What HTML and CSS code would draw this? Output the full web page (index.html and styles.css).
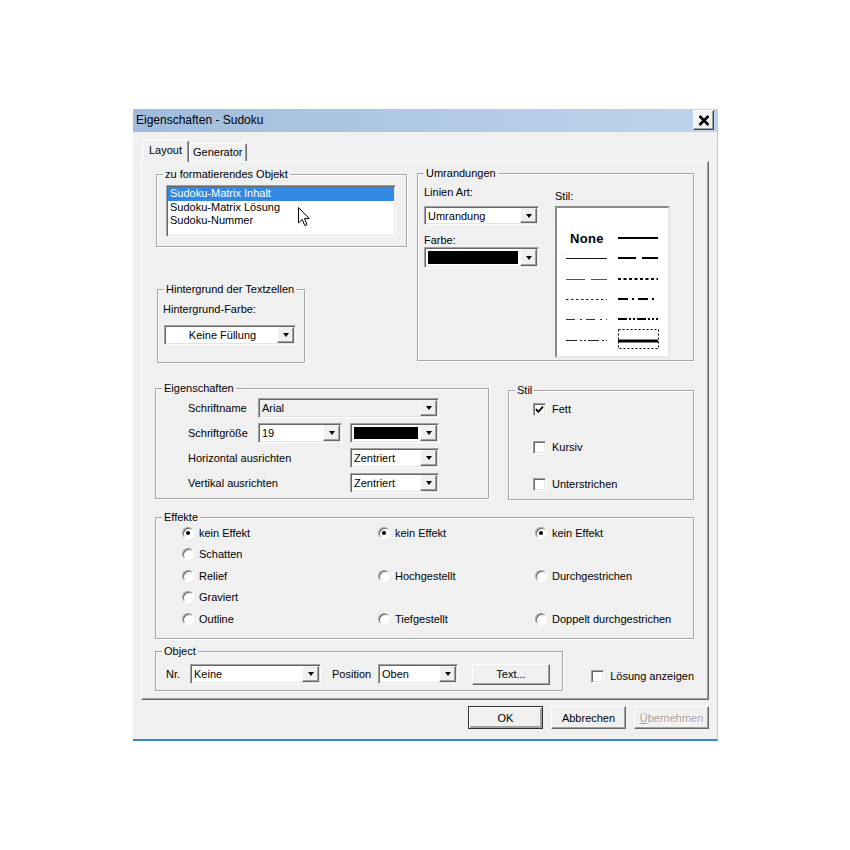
FILE: index.html
```html
<!DOCTYPE html>
<html lang="de">
    <head>
        <meta charset="UTF-8">
        <meta name="viewport" content="width=device-width, initial-scale=1.0">
        <title>Eigenschaften - Sudoku</title>
        <link rel="stylesheet" href="styles.css">
    </head>
    <body>
        <div class="dialog">
            <div class="titlebar">
                <span class="title">Eigenschaften - Sudoku</span>
                <span class="close">
                    <svg width="12" height="11" viewBox="0 0 12 11">
                        <path d="M1.5 1 L10.5 10 M10.5 1 L1.5 10" stroke="#000" stroke-width="2.6" fill="none"/>
                    </svg>
                </span>
            </div>

            <div class="body">
                <div class="tabs">
                    <div class="tab active">Layout</div>
                    <div class="tab">Generator</div>
                </div>

                <div class="panel">
                    <div class="row-top">
                        <div class="col-left">
                            <div class="group group-objekt">
                                <div class="legend">zu formatierendes Objekt</div>
                                <div class="group-body">
                                    <div class="listbox">
                                        <div class="item selected">Sudoku-Matrix Inhalt</div>
                                        <div class="item">Sudoku-Matrix Lösung</div>
                                        <div class="item">Sudoku-Nummer</div>
                                        <svg class="cursor" width="13" height="20" viewBox="0 0 13 20">
                                            <path d="M0.5 0.5 L0.5 16 L4.2 12.4 L6.8 18.6 L9 17.6 L6.5 11.6 L11.3 11.6 Z" fill="#fff" stroke="#000" stroke-width="1"/>
                                        </svg>
                                    </div>
                                </div>
                            </div>

                            <div class="group group-hintergrund">
                                <div class="legend">Hintergrund der Textzellen</div>
                                <div class="group-body">
                                    <div class="label">Hintergrund-Farbe:</div>
                                    <div class="combo combo-fill">
                                        <span class="val centered">Keine Füllung</span>
                                        <span class="drop"></span>
                                    </div>
                                </div>
                            </div>
                        </div>

                        <div class="group group-umrandung">
                            <div class="legend">Umrandungen</div>
                            <div class="group-body">
                                <div class="border-left">
                                    <div class="label">Linien Art:</div>
                                    <div class="combo combo-linie">
                                        <span class="val">Umrandung</span>
                                        <span class="drop"></span>
                                    </div>
                                    <div class="label label-farbe">Farbe:</div>
                                    <div class="combo combo-farbe">
                                        <span class="val swatch"><span class="black"></span></span>
                                        <span class="drop"></span>
                                    </div>
                                </div>
                                <div class="border-right">
                                    <div class="label">Stil:</div>
                                    <div class="stil-box">
                                        <svg width="111" height="148" viewBox="0 0 111 148">
                                            <text x="13" y="34.5" class="none-text">None</text>
                                            <line x1="61" y1="30" x2="101" y2="30" stroke="#000" stroke-width="2"/>

                                            <line x1="9" y1="50.5" x2="50" y2="50.5" stroke="#111" stroke-width="1"/>
                                            <line x1="61" y1="50" x2="101" y2="50" stroke="#000" stroke-width="2" stroke-dasharray="18 6"/>

                                            <line x1="9" y1="71.5" x2="50" y2="71.5" stroke="#555" stroke-width="1.2" stroke-dasharray="19 6"/>
                                            <line x1="61" y1="71" x2="101" y2="71" stroke="#000" stroke-width="2" stroke-dasharray="3 2.5"/>

                                            <line x1="9" y1="91.5" x2="50" y2="91.5" stroke="#222" stroke-width="1" stroke-dasharray="2.5 2.5"/>
                                            <line x1="61" y1="91" x2="101" y2="91" stroke="#000" stroke-width="2" stroke-dasharray="10 4 2 4"/>

                                            <line x1="9" y1="111.5" x2="50" y2="111.5" stroke="#333" stroke-width="1" stroke-dasharray="9 5 2 4"/>
                                            <line x1="61" y1="111" x2="101" y2="111" stroke="#000" stroke-width="2" stroke-dasharray="9 2 2 2 2 2"/>

                                            <line x1="9" y1="132.5" x2="50" y2="132.5" stroke="#222" stroke-width="1" stroke-dasharray="11 3 2 2 2 2"/>
                                            <rect x="61.5" y="121.5" width="40" height="19" fill="none" stroke="#000" stroke-width="1" stroke-dasharray="2 2"/>
                                            <line x1="61" y1="133" x2="101" y2="133" stroke="#000" stroke-width="3"/>
                                        </svg>
                                    </div>
                                </div>
                            </div>
                        </div>
                    </div>

                    <div class="row-mid">
                        <div class="group group-eigen">
                            <div class="legend">Eigenschaften</div>
                            <div class="group-body">
                                <div class="prop-row">
                                    <span class="prop-label">Schriftname</span>
                                    <div class="combo combo-font">
                                        <span class="val gray">Arial</span>
                                        <span class="drop"></span>
                                    </div>
                                </div>
                                <div class="prop-row">
                                    <span class="prop-label">Schriftgröße</span>
                                    <div class="combo combo-size">
                                        <span class="val">19</span>
                                        <span class="drop"></span>
                                    </div>
                                    <div class="combo combo-align combo-color">
                                        <span class="val swatch"><span class="black"></span></span>
                                        <span class="drop"></span>
                                    </div>
                                </div>
                                <div class="prop-row">
                                    <span class="prop-label wide">Horizontal ausrichten</span>
                                    <div class="combo combo-align">
                                        <span class="val">Zentriert</span>
                                        <span class="drop"></span>
                                    </div>
                                </div>
                                <div class="prop-row">
                                    <span class="prop-label wide">Vertikal ausrichten</span>
                                    <div class="combo combo-align">
                                        <span class="val">Zentriert</span>
                                        <span class="drop"></span>
                                    </div>
                                </div>
                            </div>
                        </div>

                        <div class="group group-stil">
                            <div class="legend">Stil</div>
                            <div class="group-body">
                                <div class="check-row">
                                    <span class="check">
                                        <svg width="9" height="9" viewBox="0 0 9 9">
                                            <path d="M1 4.2 L3.3 6.8 L8 1.6" stroke="#000" stroke-width="1.8" fill="none"/>
                                        </svg>
                                    </span>
                                    Fett
                                </div>
                                <div class="check-row"><span class="check"></span>Kursiv</div>
                                <div class="check-row"><span class="check"></span>Unterstrichen</div>
                            </div>
                        </div>
                    </div>

                    <div class="group group-effekte">
                        <div class="legend">Effekte</div>
                        <div class="group-body">
                            <div class="opt"><span class="radio on"></span>kein Effekt</div>
                            <div class="opt"><span class="radio on"></span>kein Effekt</div>
                            <div class="opt"><span class="radio on"></span>kein Effekt</div>

                            <div class="opt"><span class="radio"></span>Schatten</div>
                            <div></div>
                            <div></div>

                            <div class="opt"><span class="radio"></span>Relief</div>
                            <div class="opt"><span class="radio"></span>Hochgestellt</div>
                            <div class="opt"><span class="radio"></span>Durchgestrichen</div>

                            <div class="opt"><span class="radio"></span>Graviert</div>
                            <div></div>
                            <div></div>

                            <div class="opt"><span class="radio"></span>Outline</div>
                            <div class="opt"><span class="radio"></span>Tiefgestellt</div>
                            <div class="opt"><span class="radio"></span>Doppelt durchgestrichen</div>
                        </div>
                    </div>

                    <div class="row-bottom">
                        <div class="group group-object">
                            <div class="legend">Object</div>
                            <div class="group-body">
                                <span class="nr-label">Nr.</span>
                                <div class="combo combo-nr">
                                    <span class="val">Keine</span>
                                    <span class="drop"></span>
                                </div>
                                <span class="pos-label">Position</span>
                                <div class="combo combo-pos">
                                    <span class="val">Oben</span>
                                    <span class="drop"></span>
                                </div>
                                <button class="btn btn-text">Text...</button>
                            </div>
                        </div>
                        <div class="check-row loesung"><span class="check"></span>Lösung anzeigen</div>
                    </div>
                </div>

                <div class="buttons">
                    <button class="btn default">OK</button>
                    <button class="btn">Abbrechen</button>
                    <button class="btn disabled"><u>Ü</u>bernehmen</button>
                </div>
            </div>
        </div>
    </body>
</html>
```

FILE: styles.css
```css
* {
    box-sizing: border-box;
}

body {
    margin: 0;
    background: #fff;
    font-family: "Liberation Sans", Arial, sans-serif;
    font-size: 11px;
    color: #000;
}

.dialog {
    width: 585px;
    margin: 109px 0 0 133px;
    background: #f0f0f0;
    border-right: 1px solid #c8c8c8;
    border-bottom: 2px solid #3d86cc;
}

.titlebar {
    height: 23px;
    display: flex;
    justify-content: space-between;
    align-items: flex-start;
    padding: 0 3px;
    background: linear-gradient(to right, #a1bcdb, #b3cbe6 60%, #bed4ec);
}

.title {
    font-size: 12px;
    line-height: 23px;
}

.close {
    width: 21px;
    height: 20px;
    margin-top: 1px;
    display: flex;
    align-items: center;
    justify-content: center;
    background: #f4f4f4;
    border: 1px solid;
    border-color: #fff #404040 #404040 #fff;
    box-shadow: inset -1px -1px 0 #a0a0a0;
}

.body {
    padding: 8px 8px 10px 8px;
}

/* tabs */
.tabs {
    display: flex;
    align-items: flex-end;
    height: 21px;
    padding-left: 1px;
}

.tab {
    height: 18px;
    line-height: 16px;
    padding: 0 3px;
    background: #f0f0f0;
    border: 1px solid;
    border-bottom: none;
    border-color: #fff #696969 transparent #fff;
    box-shadow: inset -1px 0 0 #a0a0a0;
    border-radius: 2px 2px 0 0;
}

.tab.active {
    position: relative;
    z-index: 1;
    height: 22px;
    line-height: 19px;
    width: 47px;
    padding: 0 6px;
    margin-bottom: -1px;
}

.panel {
    height: 539px;
    padding: 11px 14px 0 13px;
    border: 1px solid;
    border-color: #fff #696969 #696969 #fff;
    box-shadow: inset -1px -1px 0 #a0a0a0;
}

/* group boxes: legend sits on the top border, body holds the padding */
.group {
    border: 1px solid #a6a6a6;
    box-shadow: 1px 1px 0 #fff, inset 1px 1px 0 #fff;
}

.legend {
    width: fit-content;
    height: 13px;
    line-height: 13px;
    margin: -7px 0 -6px 6px;
    padding: 0 2px;
    background: #f0f0f0;
    white-space: nowrap;
}

.label {
    line-height: 13px;
}

.row-top {
    display: flex;
    align-items: flex-start;
}

.col-left {
    width: 252px;
}

.group-objekt {
    width: 251px;
    height: 73px;
    margin: 1px 0 0 1px;
}

.group-objekt .group-body {
    padding: 10px 0 0 9px;
}

.listbox {
    position: relative;
    width: 230px;
    height: 52px;
    padding: 1px;
    background: #fff;
    border: 1px solid;
    border-color: #a0a0a0 #fff #fff #a0a0a0;
    box-shadow: inset 1px 1px 0 #696969, inset -1px -1px 0 #e3e3e3;
}

.item {
    height: 13.5px;
    line-height: 13.5px;
    padding-left: 2px;
}

.item.selected {
    background: #3388e4;
    color: #fff;
}

.cursor {
    position: absolute;
    left: 131px;
    top: 21px;
}

.group-hintergrund {
    width: 148px;
    height: 74px;
    margin: 42px 0 0 2px;
}

.group-hintergrund .group-body {
    padding: 13px 0 0 5px;
}

.group-hintergrund .combo {
    margin: 9px 0 0 1px;
}

/* combo boxes */
.combo {
    display: flex;
    height: 20px;
    padding: 1px;
    background: #fff;
    border: 1px solid;
    border-color: #a0a0a0 #fff #fff #a0a0a0;
    box-shadow: inset 1px 1px 0 #696969, inset -1px -1px 0 #e3e3e3;
}

.val {
    flex: 1;
    padding-left: 2px;
    line-height: 16px;
    white-space: nowrap;
    overflow: hidden;
    background: #fff;
}

.val.centered {
    text-align: center;
}

.val.gray {
    background: #f0f0f0;
}

.val.swatch {
    padding: 2px;
}

.black {
    display: block;
    height: 100%;
    background: #000;
}

.drop {
    width: 17px;
    display: flex;
    align-items: center;
    justify-content: center;
    background: #f0f0f0;
    border: 1px solid;
    border-color: #f0f0f0 #696969 #696969 #fff;
    box-shadow: inset -1px -1px 0 #a0a0a0;
}

.drop::before {
    content: "";
    border-top: 4px solid #000;
    border-left: 3.5px solid transparent;
    border-right: 3.5px solid transparent;
}

.combo-fill {
    width: 132px;
}

.group-umrandung {
    width: 277px;
    height: 188px;
    margin-left: 10px;
}

.group-umrandung .group-body {
    display: flex;
    gap: 16px;
    padding: 12px 0 0 6px;
}

.border-left,
.border-right {
    width: 115px;
}

.combo-linie {
    height: 19px;
    margin-top: 7px;
}

.label-farbe {
    margin-top: 9px;
}

.combo-farbe {
    height: 21px;
}

.border-right {
    padding-top: 4px;
}

.stil-box {
    width: 115px;
    height: 152px;
    margin-top: 3px;
    background: #fff;
    border: 2px solid;
    border-color: #8a8a8a #e8e8e8 #e8e8e8 #8a8a8a;
}

.stil-box svg {
    display: block;
}

.none-text {
    font-family: "Liberation Sans", Arial, sans-serif;
    font-size: 13px;
    font-weight: bold;
    letter-spacing: 0.3px;
}

/* eigenschaften + stil */
.row-mid {
    display: flex;
    align-items: flex-start;
    margin-top: 25px;
}

.group-eigen {
    width: 334px;
    height: 111px;
}

.group-eigen .group-body {
    padding: 9px 0 0 32px;
}

.prop-row {
    display: flex;
    align-items: center;
    height: 20px;
    margin-bottom: 5px;
}

.prop-label {
    width: 70px;
    flex-shrink: 0;
}

.prop-label.wide {
    width: 162px;
}

.combo-font {
    width: 181px;
}

.combo-size {
    width: 84px;
}

.combo-color {
    margin-left: 8px;
}

.combo-align {
    width: 89px;
}

.group-stil {
    width: 186px;
    height: 110px;
    margin: 2px 0 0 19px;
}

.group-stil .group-body {
    display: flex;
    flex-direction: column;
    gap: 24.5px;
    padding: 12px 0 0 24px;
}

.check-row {
    display: flex;
    align-items: center;
    height: 13px;
    line-height: 13px;
    white-space: nowrap;
}

.check {
    width: 13px;
    height: 13px;
    margin-right: 6px;
    display: flex;
    align-items: center;
    justify-content: center;
    background: #fff;
    border: 1px solid;
    border-color: #a0a0a0 #fff #fff #a0a0a0;
    box-shadow: inset 1px 1px 0 #696969, inset -1px -1px 0 #e3e3e3;
}

/* effekte */
.group-effekte {
    width: 539px;
    height: 122px;
    margin-top: 17px;
}

.group-effekte .group-body {
    display: grid;
    grid-template-columns: 196px 157px auto;
    grid-auto-rows: 21.5px;
    padding: 4px 0 0 26px;
}

.opt {
    display: flex;
    align-items: center;
}

.radio {
    position: relative;
    width: 12px;
    height: 12px;
    margin-right: 5px;
    border-radius: 50%;
    background: #fff;
    border: 1px solid;
    border-color: #a0a0a0 #fff #fff #a0a0a0;
    box-shadow: inset 1px 1px 0 #696969;
}

.radio.on::after {
    content: "";
    position: absolute;
    left: 3px;
    top: 3px;
    width: 4px;
    height: 4px;
    border-radius: 50%;
    background: #000;
}

/* object row */
.row-bottom {
    display: flex;
    align-items: flex-start;
    margin-top: 12px;
}

.group-object {
    width: 409px;
    height: 40px;
}

.group-object .group-body {
    display: flex;
    align-items: center;
    height: 32px;
    padding: 12px 0 0 10px;
}

.nr-label {
    width: 24px;
}

.combo-nr {
    width: 131px;
}

.pos-label {
    width: 46px;
    margin-left: 11px;
}

.combo-pos {
    width: 80px;
}

.btn {
    width: 75px;
    height: 23px;
    padding: 0;
    font-family: inherit;
    font-size: 11px;
    color: #000;
    background: #f0f0f0;
    border: 1px solid;
    border-color: #fff #696969 #696969 #fff;
    box-shadow: inset -1px -1px 0 #a0a0a0;
}

.btn-text {
    width: 78px;
    height: 21px;
    margin-left: 14px;
}

.loesung {
    margin: 19px 0 0 28px;
}

.buttons {
    display: flex;
    justify-content: flex-end;
    gap: 8px;
    margin-top: 6px;
}

.btn.default {
    border-color: #303030;
    box-shadow: inset 1px 1px 0 #fff, inset -2px -2px 0 #a0a0a0;
}

.btn.disabled {
    color: #a0a0a0;
    text-shadow: 1px 1px 0 #fff;
}
```
